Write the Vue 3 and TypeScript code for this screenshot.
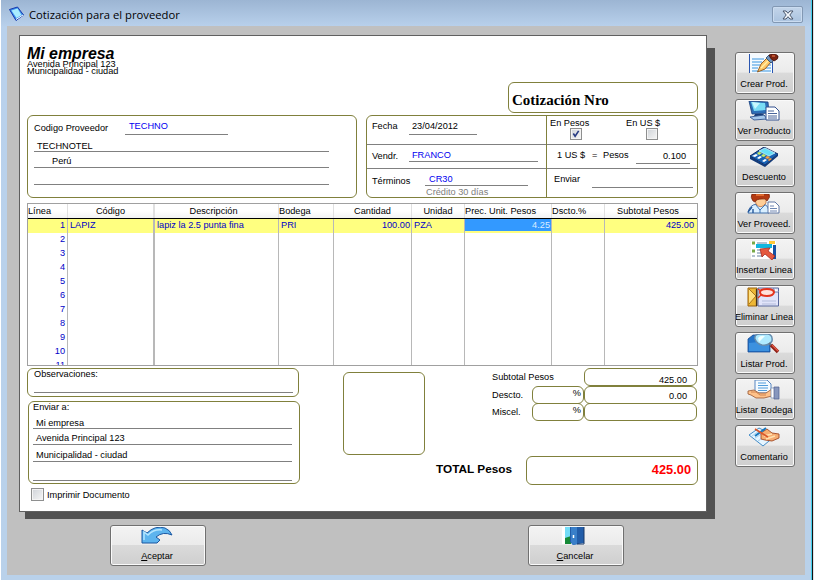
<script setup lang="ts">
interface Shape {
  d: string
  fill?: string
  stroke?: string
  w?: number
}
interface Action {
  label: string
  shapes: Shape[]
}
interface Column {
  key: string
  title: string
  cls: string
}
type Line = Record<string, string>

const columns: Column[] = [
  { key: 'linea', title: 'Línea', cls: 'right head-left' },
  { key: 'codigo', title: 'Código', cls: '' },
  { key: 'descripcion', title: 'Descripción', cls: 'wide-rule' },
  { key: 'bodega', title: 'Bodega', cls: 'head-left' },
  { key: 'cantidad', title: 'Cantidad', cls: 'right' },
  { key: 'unidad', title: 'Unidad', cls: '' },
  { key: 'precio', title: 'Prec. Unit. Pesos', cls: 'right head-left' },
  { key: 'dscto', title: 'Dscto.%', cls: 'head-left' },
  { key: 'subtotal', title: 'Subtotal Pesos', cls: 'right' },
]

const lines: Line[] = [
  {
    linea: '1',
    codigo: 'LAPIZ',
    descripcion: 'lapiz la 2.5 punta fina',
    bodega: 'PRI',
    cantidad: '100.00',
    unidad: 'PZA',
    precio: '4.25',
    dscto: '',
    subtotal: '425.00',
  },
  ...Array.from({ length: 10 }, (_, i): Line => ({ linea: String(i + 2) })),
]

const actions: Action[] = [
  {
    label: 'Crear Prod.',
    shapes: [
      { d: 'M2 0H25V19H2Z', fill: '#f4faff' },
      { d: 'M2.5 0V19M25.5 8V19', stroke: '#2a55b0', w: 1 },
      { d: 'M5 5H17M5 8H15M5 11H13M5 14H11M5 17H24M19 14H24M21 11H24', stroke: '#77b7ea', w: 1.4 },
      { d: 'M10.5 18L14 10L20 4L24 8L18 15Z', fill: '#ffc766', stroke: '#8a5218', w: 0.9 },
      { d: 'M14 14L21 7', stroke: '#fff0a8', w: 1.3 },
      { d: 'M19 4L22 1L27 6L24 9Z', fill: '#6d93bd', stroke: '#24405f', w: 0.8 },
      { d: 'M22 1Q27 -2 31 2Q32 5 27 7Q23 5 22 1Z', fill: '#7c2412', stroke: '#3d1008', w: 0.7 },
      { d: 'M25 2L28 2', stroke: '#d1603a', w: 1.3 },
    ],
  },
  {
    label: 'Ver Producto',
    shapes: [
      { d: 'M2 0L21 1L22 12L5 13Z', fill: '#2c6fb8', stroke: '#153c7c', w: 0.8 },
      { d: 'M4 1L18 2L19 9L7 10Z', fill: '#79dcf5' },
      { d: 'M5 1L13 2L8 8Z', fill: '#c8f8ff' },
      { d: 'M8 13H16L18 15H7Z', fill: '#153b78' },
      { d: 'M3 16L17 14L20 18L7 19Z', fill: '#a5c8ec', stroke: '#31558f', w: 0.9 },
      { d: 'M19 6H28L32 10V19H19Z', fill: '#fff', stroke: '#33518f', w: 1 },
      { d: 'M21 10H27M21 12.5H30M21 15H30M21 17H30', stroke: '#35528f', w: 0.9 },
    ],
  },
  {
    label: 'Descuento',
    shapes: [
      { d: 'M3 9L17 0L31 7L18 18Z', fill: '#1762b4', stroke: '#0c2865', w: 1 },
      { d: 'M3 9V12L18 20L31 9V7L18 18Z', fill: '#123a79' },
      { d: 'M12 4L18 1L28 6L22 9Z', fill: '#65def7', stroke: '#e0fbff', w: 0.7 },
      { d: 'M5 9L9 7L11 8L8 10ZM10 11L13 9L15 10L12 12ZM15 14L18 12L20 13L17 15Z', fill: '#fff' },
      { d: 'M10 6L12 5L15 6L12 8ZM14 9L16 7L19 8L17 10Z', fill: '#c8eb63' },
      { d: 'M18 11L20 9L23 10L21 12ZM21 13L23 11L25 12L22 14Z', fill: '#ff9b35' },
    ],
  },
  {
    label: 'Ver Proveed.',
    shapes: [
      { d: 'M1 19Q2 11 10 10H17Q22 12 22 19Z', fill: '#d9efff', stroke: '#3d6ca8', w: 1 },
      { d: 'M8 4H19V9Q14 16 9 10Z', fill: '#ffcd96', stroke: '#a44d1c', w: 0.6 },
      { d: 'M6 7Q3 3 5 0H22Q24 3 20 7Q19 4 15 5Q9 5 8 8Z', fill: '#b43a12', stroke: '#73200a', w: 0.7 },
      { d: 'M9 1H17', stroke: '#ef7c3b', w: 1.4 },
      { d: 'M9 11L13 16L18 11M13 15V19', stroke: '#4279b8', w: 1 },
      { d: 'M1 18L5 13M6 19V15', stroke: '#24579b', w: 1.4 },
      { d: 'M21 8H28L32 12V19H21Z', fill: '#fff', stroke: '#506b9d', w: 0.9 },
      { d: 'M23 12H27M23 14.5H30M23 17H30', stroke: '#5e79aa', w: 0.9 },
    ],
  },
  {
    label: 'Insertar Linea',
    shapes: [
      { d: 'M4 1H29V19H4Z', fill: '#fff' },
      { d: 'M5 3H8M5 11H8', stroke: '#79a947', w: 3 },
      { d: 'M10 3H20M10 10H16M10 13H15M10 16H16M5 16H8', stroke: '#6982a2', w: 1.2 },
      { d: 'M9 4H25V8H9Z', fill: '#10b6df' },
      { d: 'M22 1H28V4H22Z', fill: '#ffc837' },
      { d: 'M26 5H29V19H26Z', fill: '#1552a6' },
      { d: 'M13 9L23 8L21 11L28 16L25 20L18 14L15 17Z', fill: '#e5593f', stroke: '#9d2119', w: 0.7 },
    ],
  },
  {
    label: 'Eliminar Linea',
    shapes: [
      { d: 'M1 1H10V19H1Z', fill: '#edb735', stroke: '#9b620c', w: 1 },
      { d: 'M2 2L9 9L2 17', fill: '#ffe080', stroke: '#a06b15', w: 0.9 },
      { d: 'M9.5 2V19', stroke: '#46341c', w: 1.2 },
      { d: 'M11 1H31.5V19H11Z', fill: '#e1e4fa', stroke: '#59689c', w: 1 },
      { d: 'M27 1V5H32', fill: '#fff', stroke: '#59689c', w: 0.9 },
      { d: 'M15 14H29M15 17H29', stroke: '#b4bddb', w: 1 },
      { d: 'M13 5Q13 2 20 2Q27 2 27 5.500Q26 9 20 9Q13 9 13 5Z', fill: '#ffe1dc', stroke: '#e5331d', w: 2 },
      { d: 'M11 2L14 4M14 8L11 11', stroke: '#e5331d', w: 1.3 },
    ],
  },
  {
    label: 'Listar Prod.',
    shapes: [
      { d: 'M1 5L6 1H12L14 4H23V18H1Z', fill: '#2475ca', stroke: '#164a92', w: 0.8 },
      { d: 'M2 9L22 7V17H2Z', fill: '#3c91df' },
      { d: 'M8 5Q7 0 13 0H21Q26 1 25 7Q22 12 15 11Q10 10 8 5Z', fill: '#aeeaff', stroke: '#668cad', w: 1.5 },
      { d: 'M11 4Q13 1 18 2L12 8Z', fill: '#efffff' },
      { d: 'M22 9L25 12', stroke: '#697683', w: 2 },
      { d: 'M24 11L31 18', stroke: '#8e2119', w: 3.5 },
      { d: 'M25 11L31 17', stroke: '#e75a45', w: 1.3 },
    ],
  },
  {
    label: 'Listar Bodega',
    shapes: [
      { d: 'M8 0H20L24 4V13H8Z', fill: '#f5fbff', stroke: '#5685c0', w: 1 },
      { d: 'M11 3H19M11 5.5H21M11 8H21M11 10.5H20', stroke: '#4f9cdb', w: 1.1 },
      { d: 'M1 11L7 10L12 13L19 13L25 9V16L17 18H9L4 15L1 14Z', fill: '#ffc28a', stroke: '#965330', w: 0.8 },
      { d: 'M4 12H9L13 15H19', stroke: '#ca7e4b', w: 0.9 },
      { d: 'M24 8H28V18H24Z', fill: '#fff', stroke: '#738bad', w: 0.7 },
      { d: 'M27 7H32V19H27Z', fill: '#8797bd', stroke: '#4d5f91', w: 0.7 },
    ],
  },
  {
    label: 'Comentario',
    shapes: [
      { d: 'M2 8L12 1L28 9L16 19Z', fill: '#e5f5ff', stroke: '#438bc5', w: 1 },
      { d: 'M5 9L12 4M8 11L16 6M11 14L17 10', stroke: '#9cccee', w: 0.9 },
      { d: 'M14 12L14 6L20 2L25 6L32 7V11L25 14L18 13Z', fill: '#f6ad72', stroke: '#a34a25', w: 0.9 },
      { d: 'M17 9L25 7M19 12L28 9', stroke: '#ffe0b0', w: 1.4 },
      { d: 'M8 9L19 1', stroke: '#1878bd', w: 2 },
      { d: 'M8 2L16 7L21 10', stroke: '#d9572b', w: 1.6 },
    ],
  },
]

const shipTo: string[] = ['Mi empresa', 'Avenida Principal 123', 'Municipalidad - ciudad', '']
</script>

<template>
  <div class="desktop">
    <main class="window">
      <header class="titlebar">
        <svg class="app-icon" viewBox="0 0 16 16">
          <path d="M1 3.500L9 1L15 9L7.500 14.500Z" fill="#3d91ed" stroke="#1638ad" />
          <path d="M3 4.500L9 2.500L13 9L8 12Z" fill="#a9edff" />
          <path d="M7.500 13.500L14.500 9" stroke="#fff" />
        </svg>
        <h1>Cotización para el proveedor</h1>
        <button class="close" aria-label="Cerrar">
          <svg viewBox="0 0 12 10">
            <path d="M1 1H4L6 3.300L8 1H11L7.800 5L11 9H8L6 6.700L4 9H1L4.200 5Z" fill="#f4f8fc" stroke="#48556b" />
          </svg>
        </button>
      </header>

      <div class="client">
        <section class="work">
          <div class="sheet">
            <article class="paper">
              <div class="top">
                <div class="company">
                  <h2>Mi empresa</h2>
                  <p>Avenida Principal 123</p>
                  <p>Municipalidad - ciudad</p>
                </div>
                <div class="box number">Cotización Nro</div>
              </div>

              <div class="info">
                <section class="box supplier">
                  <div class="code-row">
                    <span class="lbl">Codigo Proveedor</span>
                    <span class="code blue">TECHNO</span>
                  </div>
                  <div class="rule name">TECHNOTEL</div>
                  <div class="rule country">Perú</div>
                  <div class="rule empty"></div>
                </section>

                <section class="box terms">
                  <div class="terms-left">
                    <div class="cell c1"><span>Fecha</span><b class="fill date">23/04/2012</b></div>
                    <div class="cell c2"><span>Vendr.</span><b class="fill seller blue">FRANCO</b></div>
                    <div class="cell c3">
                      <span>Términos</span>
                      <div class="credit"><b class="fill blue">CR30</b><i>Crédito 30 días</i></div>
                    </div>
                  </div>
                  <div class="terms-right">
                    <div class="cell currencies">
                      <label class="cur"><span>En Pesos</span>
                        <span class="check"><svg viewBox="0 0 9 9"><path d="M1.500 4L3.500 7L7.500 1" fill="none" stroke="#263a82" stroke-width="1.800" /></svg></span>
                      </label>
                      <label class="cur usd"><span>En US $</span><span class="check"></span></label>
                    </div>
                    <div class="cell rate"><span class="one">1 US $</span><span class="eq">=</span><span class="pesos">Pesos</span><b class="fill">0.100</b></div>
                    <div class="cell send"><span>Enviar</span><b class="fill"></b></div>
                  </div>
                </section>
              </div>

              <section class="grid">
                <div class="line head">
                  <div v-for="c in columns" :key="c.key" class="td" :class="[c.key, c.cls]">{{ c.title }}</div>
                </div>
                <div v-for="(l, i) in lines" :key="i" class="line" :class="{ active: i === 0 }">
                  <div v-for="c in columns" :key="c.key" class="td" :class="[c.key, c.cls]">{{ l[c.key] }}</div>
                </div>
              </section>

              <div class="bottom">
                <div class="notes">
                  <section class="box remarks"><span>Observaciones:</span></section>
                  <section class="box ship">
                    <span class="caption">Enviar a:</span>
                    <div v-for="(s, i) in shipTo" :key="i" class="rule" :class="'s' + i">{{ s }}</div>
                  </section>
                  <label class="print"><span class="check"></span><span>Imprimir Documento</span></label>
                </div>
                <div class="box stamp"></div>
                <section class="totals">
                  <div class="sum first"><span>Subtotal Pesos</span><div class="box amount">425.00</div></div>
                  <div class="sum"><span>Descto.</span><div class="box pct">%</div><div class="box amount">0.00</div></div>
                  <div class="sum"><span>Miscel.</span><div class="box pct">%</div><div class="box amount"></div></div>
                  <div class="total"><strong>TOTAL Pesos</strong><div class="box grand">425.00</div></div>
                </section>
              </div>
            </article>
          </div>

          <div class="commands">
            <button class="btn">
              <svg viewBox="0 0 34 18">
                <path d="M2 16V3L7 6Q15 -2 25 1Q30 3 32 8Q23 4 16 10L20 13L17 16Z" fill="#5db4ee" stroke="#1b57a1" />
                <path d="M4 13V5L8 8Q14 2 22 3" fill="none" stroke="#b5e6ff" stroke-width="1.500" />
              </svg>
              <span><u>A</u>ceptar</span>
            </button>
            <button class="btn">
              <svg viewBox="0 0 34 18">
                <path d="M4 0H26V17H4Z" fill="#fff" />
                <path d="M7 0H13V17H7Z" fill="#73dcf7" />
                <path d="M7 11L13 9V17H7Z" fill="#178a38" />
                <path d="M12 0H26V16L15 18L12 15Z" fill="#225da9" />
                <path d="M13 0H19V17L15 18L13 15Z" fill="#397fc9" />
                <path d="M15.500 8V11" stroke="#fff" stroke-width="1.500" />
                <path d="M26 0V17H19" fill="none" stroke="#193867" />
              </svg>
              <span><u>C</u>ancelar</span>
            </button>
          </div>
        </section>

        <aside class="actions">
          <button v-for="a in actions" :key="a.label" class="btn">
            <svg viewBox="0 0 34 20">
              <path v-for="(s, i) in a.shapes" :key="i" :d="s.d" :fill="s.fill ?? 'none'" :stroke="s.stroke ?? 'none'" :stroke-width="s.w ?? 1" />
            </svg>
            <span>{{ a.label }}</span>
          </button>
        </aside>
      </div>
    </main>
  </div>
</template>

<style>
body {
  margin: 0;
  overflow: hidden;
}
</style>

<style scoped>
* {
  box-sizing: border-box;
}
.desktop {
  width: 814px;
  height: 580px;
  padding-left: 1px;
  background: #fff;
  font: 9.2px/10px "Liberation Sans", Arial, sans-serif;
  color: #000;
  border-right: 1px solid #dfe3e8;
}
.window {
  width: 812px;
  height: 580px;
  padding: 0 7px 5px 6px;
  background: linear-gradient(#9cb5d3, #b9d1ec 27px, #b9d1ea);
  border-right: 1px solid #111;
  box-shadow: inset -1px 0 #43d0ee;
  overflow: hidden;
}
h1, h2, p { margin: 0; }
b, i { font-weight: normal; font-style: normal; }
button { font: inherit; color: inherit; }
.titlebar {
  height: 26px;
  display: flex;
  align-items: flex-start;
}
.app-icon {
  width: 17px;
  height: 16px;
  margin: 6px 0 0 1px;
}
h1 {
  flex: 1;
  margin: 6px 0 0 4px;
  font: 11.25px/17px "Open Sans", "Noto Sans", sans-serif;
}
.close {
  width: 31px;
  height: 17px;
  margin: 6px 2px 0 0;
  padding: 0;
  border: 1px solid #8298b3;
  border-radius: 2px;
  background: linear-gradient(#c3d5ea, #abc3df);
  box-shadow: inset 0 0 0 1px #cbdcf0;
  display: flex;
  align-items: center;
  justify-content: center;
}
.close svg { width: 12px; height: 10px; }
.client {
  height: 549px;
  width: 798px;
  background: #c0c0c0;
  display: flex;
}
.work { padding: 9px 0 0 12px; }
.sheet {
  position: relative;
  isolation: isolate;
}
.sheet::before {
  content: "";
  position: absolute;
  z-index: -1;
  left: 6px;
  right: -8px;
  top: 13px;
  bottom: -7px;
  background: #525252;
}
.paper {
  width: 688px;
  height: 477px;
  border: 1px solid #606060;
  background: #fff;
  padding: 0 8px 0 7px;
  display: flex;
  flex-direction: column;
}
.box {
  border: 1px solid #80803c;
  border-radius: 6px;
}
.blue { color: #0000f0; }
.top {
  height: 79px;
  display: flex;
  justify-content: space-between;
}
.company { padding-top: 10px; }
h2 {
  font-size: 15.9px;
  line-height: 16px;
  font-style: italic;
}
.company p { line-height: 7px; }
.company p:first-of-type { margin-top: -1px; }
.number {
  width: 190px;
  height: 31px;
  margin-top: 46px;
  padding: 8px 0 0 3px;
  font: bold 15px/18px "Liberation Serif", serif;
}
.info {
  display: flex;
  justify-content: space-between;
}
.supplier {
  width: 330px;
  height: 83px;
  padding-left: 6px;
}
.code-row {
  height: 19px;
  display: flex;
}
.lbl { width: 91px; padding-top: 7px; }
.code {
  width: 103px;
  padding: 5px 0 0 4px;
  border-bottom: 1px solid #808080;
}
.rule {
  border-bottom: 1px solid #808080;
  width: 295px;
}
.name { height: 17px; padding: 6px 0 0 3px; }
.country { height: 16px; padding: 4px 0 0 18px; }
.empty { height: 17px; }
.terms {
  width: 332px;
  height: 83px;
  display: flex;
}
.terms-left {
  flex: none;
  width: 180px;
  border-right: 1px solid #80803c;
}
.terms-right { width: 150px; flex: none; }
.cell {
  display: flex;
  height: 24px;
  border-bottom: 1px solid #808080;
}
.terms-left .cell { padding-left: 5px; }
.terms-left .cell > span { width: 37px; padding-top: 6px; white-space: nowrap; }
.cell.c1, .cell.currencies { height: 29px; }
.cell.c3, .cell.send { height: 28px; border-bottom: 0; }
.terms-left .c1 > span { padding-top: 5px; }
.terms-left .c3 > span { width: 53px; padding-top: 7px; }
.fill { border-bottom: 1px solid #808080; }
.date { width: 68px; height: 19px; padding: 5px 0 0 3px; }
.seller { width: 129px; height: 17px; padding: 5px 0 0 3px; }
.credit { width: 103px; }
.credit b { display: block; height: 17px; padding: 5px 0 0 4px; }
.credit i { display: block; padding: 1px 0 0 1px; color: #808080; }
.currencies { padding-left: 3px; }
.cur {
  width: 76px;
  padding-top: 2px;
  flex: none;
}
.cur.usd { width: 60px; }
.cur > span { display: block; }
.check {
  width: 12px;
  height: 12px;
  padding: 1px;
  border: 1px solid #8e8f8f;
  background: linear-gradient(135deg, #cfd3d8, #f6f6f6);
  box-shadow: inset 0 0 0 1px #f4f4f4;
}
.cur .check { margin-left: 20px; }
.check svg { display: block; width: 8px; height: 8px; }
.rate > span { padding-top: 5px; }
.one { margin-left: 10px; width: 35px; }
.eq { width: 11px; }
.pesos { width: 33px; }
.rate .fill { width: 54px; height: 19px; padding: 6px 4px 0 0; text-align: right; }
.send > span { width: 38px; margin-left: 7px; padding-top: 5px; }
.send .fill { width: 101px; height: 19px; }
.grid {
  height: 163px;
  margin-top: 5px;
  border: 1px solid #a0a0a0;
  overflow: hidden;
}
.line {
  display: flex;
  height: 14px;
  color: #0000c8;
}
.head {
  height: 15px;
  color: #000;
  border-bottom: 1px solid #000;
  background: linear-gradient(#fff 50%, #f2f3f4);
}
.td {
  height: 14px;
  line-height: 12px;
  padding: 0 2px;
  border-right: 1px solid #b8b8b8;
  white-space: nowrap;
  overflow: hidden;
}
.head .td { text-align: center; line-height: 14px; border-color: #e0e0e0; padding: 0 1px; }
.head .head-left { text-align: left; padding: 0; }
.head .descripcion { padding-right: 7px; border-left-color: #e0e0e0; }
.head .subtotal { padding-right: 7px; }
.right { text-align: right; }
.linea { width: 40px; }
.codigo { width: 86px; }
.descripcion { width: 125px; border-left: 1px solid #b8b8b8; }
.bodega { width: 55px; }
.cantidad { width: 78px; }
.unidad { width: 53px; }
.precio { width: 87px; }
.dscto { width: 53px; }
.subtotal { width: 92px; border-right: 0; }
.line:not(.head) .right { padding-right: 1px; }
.line:not(.head) .linea { padding-right: 2px; }
.line:not(.head) .subtotal { padding-right: 3px; }
.active { background: #ffff80; }
.active .precio {
  background: linear-gradient(#3399ff 12px, #ffff80 12px);
  color: #d9edff;
}
.bottom {
  display: flex;
  margin-top: 2px;
}
.notes { width: 316px; }
.remarks {
  width: 272px;
  height: 29px;
  padding-left: 6px;
}
.remarks span {
  display: block;
  width: 259px;
  height: 24px;
  border-bottom: 1px solid #808080;
}
.ship {
  width: 272px;
  height: 83px;
  margin: 4px 0 0 1px;
  padding-left: 4px;
}
.caption { display: block; height: 10px; }
.ship .rule { width: 259px; padding-left: 3px; }
.s0 { height: 17px; padding-top: 6px; }
.s1 { height: 16px; padding-top: 4px; }
.s2 { height: 17px; padding-top: 5px; }
.s3 { height: 19px; }
.print {
  display: flex;
  align-items: center;
  gap: 3px;
  margin: 4px 0 0 4px;
}
.print .check { width: 13px; height: 13px; }
.stamp {
  width: 82px;
  height: 83px;
  margin-top: 4px;
}
.totals { width: 273px; flex: none; }
.sum {
  display: flex;
  height: 17px;
  padding-left: 67px;
}
.sum.first { height: 18px; }
.sum > span { width: 40px; padding-top: 4px; white-space: nowrap; }
.sum.first > span { width: 92px; }
.pct { width: 52px; height: 18px; text-align: right; padding: 1px 2px 0 0; }
.amount {
  width: 113px;
  height: 18px;
  padding: 4px 9px 0 0;
  text-align: right;
}
.sum.first .amount { padding-top: 6px; }
.total {
  display: flex;
  justify-content: space-between;
  margin-top: 36px;
  padding-left: 11px;
}
.total strong { font-size: 11.8px; line-height: 26px; }
.grand {
  width: 172px;
  height: 29px;
  padding-right: 6px;
  color: #ff0000;
  font: bold 12.8px/26px "Liberation Sans", Arial, sans-serif;
  text-align: right;
}
.btn {
  flex: none;
  width: 60px;
  height: 42px;
  padding: 1px 2px 0 0;
  overflow: hidden;
  border: 1px solid #707070;
  border-radius: 3px;
  background: linear-gradient(#f3f3f3 0%, #ebebeb 48%, #dadada 50%, #cfcfcf 100%);
  box-shadow: inset 0 0 0 1px #fafafa;
  display: flex;
  flex-direction: column;
  align-items: center;
}
.btn svg { width: 34px; height: 20px; flex: none; }
.btn span { line-height: 11px; margin-top: 5px; white-space: nowrap; }
.actions {
  margin-left: 28px;
  padding-top: 26px;
  display: flex;
  flex-direction: column;
  gap: 4.62px;
}
.commands {
  display: flex;
  padding: 13px 0 0 91px;
  gap: 322px;
}
.commands .btn { width: 96px; height: 41px; }
.commands svg { height: 18px; }
.commands .btn span { margin-top: 6px; }
</style>
